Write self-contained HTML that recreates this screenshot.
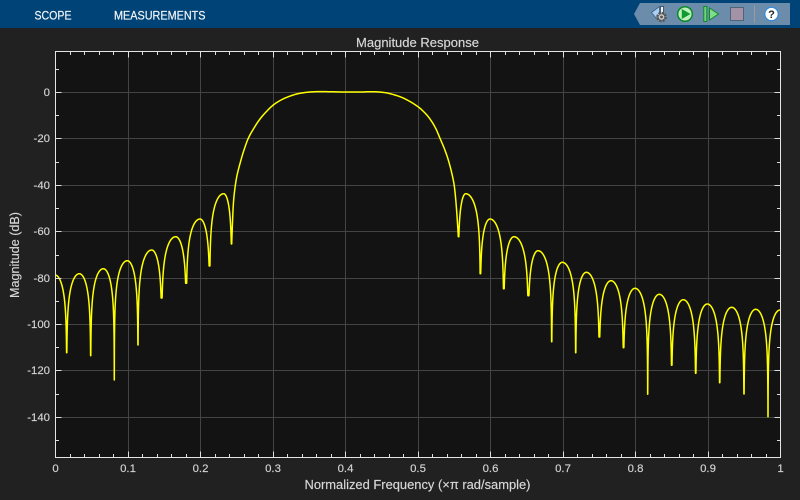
<!DOCTYPE html>
<html><head><meta charset="utf-8"><style>
html,body{margin:0;padding:0;width:800px;height:500px;overflow:hidden;background:#212121}
svg{display:block}
text{font-family:"Liberation Sans",sans-serif}
</style></head><body>
<svg id="s" xmlns="http://www.w3.org/2000/svg" width="800" height="500" viewBox="0 0 800 500">
<rect width="800" height="500" fill="#212121"/>
<rect width="800" height="28" fill="#004376"/>
<g font-size="11.500" fill="#f2f5f8" stroke="#f2f5f8" stroke-width=".2">
<text x="34.500" y="19.500" textLength="37" lengthAdjust="spacingAndGlyphs">SCOPE</text>
<text x="114" y="19.500" textLength="91.500" lengthAdjust="spacingAndGlyphs">MEASUREMENTS</text>
</g>
<polygon points="640,3 790,3 790,25 640,25 634,14" fill="#6b8dab"/>
<!-- settings icon -->
<polygon points="651.500,12.500 659.500,6.500 659.500,17 656,18" fill="#a8d0f4" stroke="#3f5f80" stroke-width=".8"/>
<rect x="660.500" y="6.500" width="3" height="8" fill="#f0f4f8" stroke="#33404e" stroke-width=".8"/>
<circle cx="661.500" cy="17" r="4.200" fill="none" stroke="#555" stroke-width="2.200" stroke-dasharray="2.200 1.100"/>
<circle cx="661.500" cy="17" r="3.200" fill="#c8c8c8" stroke="#555" stroke-width=".6"/>
<circle cx="661.500" cy="17" r="1.400" fill="#555"/>
<!-- play -->
<circle cx="685" cy="14" r="7.300" fill="#bdf0bb" stroke="#0a8a2a" stroke-width="1.500"/>
<polygon points="681.800,9 690.500,14 681.800,19" fill="#0f9a32"/>
<!-- step -->
<rect x="703.800" y="6.500" width="3" height="15" fill="#6fd67a" stroke="#0a8a2a" stroke-width="1"/>
<polygon points="709.500,8 718.500,14 709.500,20" fill="#7fdc88" stroke="#0a8a2a" stroke-width="1"/>
<!-- stop -->
<rect x="730.500" y="7.500" width="13" height="13" fill="#a493a6" stroke="#4f6478" stroke-width="1"/>
<rect x="754" y="5" width="1" height="18" fill="#9a9a9a"/>
<!-- help -->
<circle cx="771.500" cy="14" r="6.700" fill="#fff" stroke="#2f8ae0" stroke-width="1.200"/>
<text x="771.500" y="18" font-size="11" font-weight="bold" fill="#222" text-anchor="middle">?</text>

<rect x="55.500" y="51.500" width="725" height="406" fill="#131313"/>
<path fill="none" stroke="#444" stroke-width="1" d="M128.500 52V457M200.500 52V457M273.500 52V457M345.500 52V457M418.500 52V457M490.500 52V457M563.500 52V457M635.500 52V457M708.500 52V457M56 92.500H780M56 138.500H780M56 185.500H780M56 231.500H780M56 278.500H780M56 324.500H780M56 370.500H780M56 417.500H780"/>
<path id="curve" fill="none" stroke="#ffff00" stroke-width="1.500" stroke-linejoin="round" d=""/>
<path id="ticks" fill="none" stroke="#dcdcdc" stroke-width="1" d=""/>
<rect x="55.500" y="51.500" width="725" height="406" fill="none" stroke="#e4e4e4" stroke-width="1"/>

<g font-size="11.400" fill="#d4d4d4" stroke="#d4d4d4" stroke-width=".15" text-anchor="end">
<text x="50" y="96">0</text>
<text x="50" y="142">-20</text>
<text x="50" y="189">-40</text>
<text x="50" y="235">-60</text>
<text x="50" y="282">-80</text>
<text x="50" y="328">-100</text>
<text x="50" y="374">-120</text>
<text x="50" y="421">-140</text>
</g>
<g font-size="11.400" fill="#d4d4d4" stroke="#d4d4d4" stroke-width=".15" text-anchor="middle">
<text x="55.500" y="472">0</text>
<text x="128" y="472">0.1</text>
<text x="200.500" y="472">0.2</text>
<text x="273" y="472">0.3</text>
<text x="345.500" y="472">0.4</text>
<text x="418" y="472">0.5</text>
<text x="490.500" y="472">0.6</text>
<text x="563" y="472">0.7</text>
<text x="635.500" y="472">0.8</text>
<text x="708" y="472">0.9</text>
<text x="780.500" y="472">1</text>
</g>
<g font-size="12.800" fill="#d8d8d8" stroke="#d8d8d8" stroke-width=".15" text-anchor="middle">
<text x="417.500" y="47" textLength="123" lengthAdjust="spacingAndGlyphs">Magnitude Response</text>
<text x="417.500" y="489" textLength="226" lengthAdjust="spacingAndGlyphs">Normalized Frequency (×π rad/sample)</text>
<text transform="translate(19,255) rotate(-90)" textLength="86" lengthAdjust="spacingAndGlyphs">Magnitude (dB)</text>
</g>
</svg>
<script>
(function(){
var t="",i,x,y;
for(i=0;i<=50;i++){x=Math.round(55+i*14.5)+.5;var len=i%5==0?5.500:3;t+="M"+x+" 52v"+len+"M"+x+" 457v-"+len;}
var ys=[69.500,92.500,115.500,138.500,162.500,185.500,208.500,231.500,255.500,278.500,301.500,324.500,347.500,370.500,394.500,417.500,440.500];
for(i=0;i<ys.length;i++){var l=(i%2==1)?5.500:3;t+="M56 "+ys[i]+"h"+l+"M780 "+ys[i]+"h-"+l;}
document.getElementById("ticks").setAttribute("d",t);
var L=[[55,275,1],[66.700,352.700,0],[79.300,273.700,1],[90.700,355.700,0],[103.300,268.700,1],[114.300,380,0],[127.300,260.700,1],[138,345,0],[151.700,250,1],[161.700,298,0],[175.700,236.700,1],[186.300,283.300,0],[200,219,1],[209.700,266,0],[223.700,193.700,1],[231.700,244,0]];
var R=[[458.300,236.700,0],[465.700,193.700,1],[480.300,273.700,0],[490,219,1],[503.700,288.700,0],[514,236.700,1],[528.300,295.700,0],[538,250.700,1],[551.700,341.700,0],[562.300,262.300,1],[575.700,352.700,0],[586.300,272.300,1],[599.300,337,0],[611,280.700,1],[623.500,347.700,0],[635,288.300,1],[647.700,394.300,0],[659.300,294.300,1],[671.700,365.300,0],[683.300,299.700,1],[695.700,373.300,0],[707.300,304,1],[719.700,382.700,0],[731.700,307.300,1],[744,394,0],[755.700,309.300,1],[768,416.700,0],[780,310,1]];
var pts=[];
function lobes(A){
 for(var k=0;k<A.length-1;k++){
  var a=A[k],b=A[k+1],pk=a[2]?a:b,nl=a[2]?b:a,n=40;
  for(var j=(k==0?0:1);j<=n;j++){
   var f=j/n;
   var u=a[2]?1-f:f;
   u=u*u*(1.2-.2*u);
   var sx=a[2]?1-u:u;
   var px=a[0]+(b[0]-a[0])*sx;
   var tt=a[2]?1-sx:sx;
   var d=-46.430*Math.log(Math.sin(tt*Math.PI/2)+1e-9)/Math.LN10;
   var py=Math.min(pk[1]+d,nl[1]);
   pts.push([px,py]);
  }
 }
}
lobes(L);
var M=[[231.700,244],[232.400,225],[233.300,205],[234.700,190],[237,175.500],[240.700,161],[244,150],[248.300,138.300],[254,128],[260,119],[266.500,111.500],[273.300,105],[282,99.500],[291.700,95.500],[300,93.300],[310,92],[320,91.600],[328,91.700],[345,92],[362,92],[369,91.700],[378,91.900],[388,93.200],[400,96.700],[409,101],[418,106.700],[424.500,112.500],[430,119],[435.500,128],[440,138.300],[444.500,149],[448.300,160],[451.500,172],[454,184],[455.500,197],[456.800,213],[457.800,228],[458.300,236.700]];
for(i=0;i<M.length-1;i++){
 var p0=M[Math.max(i-1,0)],p1=M[i],p2=M[i+1],p3=M[Math.min(i+2,M.length-1)];
 for(var q=1;q<=8;q++){
  var s=q/8,s2=s*s,s3=s2*s;
  pts.push([
   .5*(2*p1[0]+(p2[0]-p0[0])*s+(2*p0[0]-5*p1[0]+4*p2[0]-p3[0])*s2+(3*p1[0]-p0[0]-3*p2[0]+p3[0])*s3),
   .5*(2*p1[1]+(p2[1]-p0[1])*s+(2*p0[1]-5*p1[1]+4*p2[1]-p3[1])*s2+(3*p1[1]-p0[1]-3*p2[1]+p3[1])*s3)
  ]);
 }
}
lobes(R);
var d="M"+pts[0][0].toFixed(2)+" "+pts[0][1].toFixed(2);
for(i=1;i<pts.length;i++)d+="L"+pts[i][0].toFixed(2)+" "+pts[i][1].toFixed(2);
document.getElementById("curve").setAttribute("d",d);
})();
</script>
</body></html>
